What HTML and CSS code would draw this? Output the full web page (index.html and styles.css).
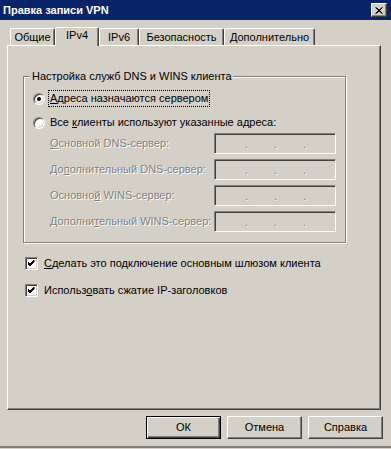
FILE: index.html
```html
<!DOCTYPE html>
<html lang="ru">
<head>
<meta charset="utf-8">
<title>Правка записи VPN</title>
<link rel="stylesheet" href="styles.css">
</head>
<body>
<div class="window">
  <div class="titlebar">
    <span class="title">Правка записи VPN</span>
    <span class="close"><svg width="8" height="7" viewBox="0 0 8 7"><path d="M0.5 0.5 L7 6.5 M1.5 0.5 L7.5 6.5 M7 0.5 L0.5 6.5 M7.5 0.5 L1.5 6.5" stroke="#000" stroke-width="1" fill="none"/></svg></span>
  </div>
  <div class="tabs">
    <div class="tab t1">Общие</div>
    <div class="tab active t2">IPv4</div>
    <div class="tab t3">IPv6</div>
    <div class="tab t4">Безопасность</div>
    <div class="tab t5">Дополнительно</div>
  </div>
  <div class="panel">
    <fieldset class="group">
      <legend>Настройка служб DNS и WINS клиента</legend>
      <div class="radio-row">
        <span class="radio checked"></span>
        <span class="focus"><u>А</u>дреса назначаются сервером</span>
      </div>
      <div class="radio-row second">
        <span class="radio"></span>
        <span>Все <u>к</u>лиенты используют указанные адреса:</span>
      </div>
      <div class="fields">
        <div class="field-row">
          <span class="lbl"><u>О</u>сновной DNS-сервер:</span>
          <span class="ip"><i>.</i><i>.</i><i>.</i></span>
        </div>
        <div class="field-row">
          <span class="lbl">До<u>п</u>олнительный DNS-сервер:</span>
          <span class="ip"><i>.</i><i>.</i><i>.</i></span>
        </div>
        <div class="field-row">
          <span class="lbl">Основно<u>й</u> WINS-сервер:</span>
          <span class="ip"><i>.</i><i>.</i><i>.</i></span>
        </div>
        <div class="field-row">
          <span class="lbl">Дополни<u>т</u>ельный WINS-сервер:</span>
          <span class="ip"><i>.</i><i>.</i><i>.</i></span>
        </div>
      </div>
    </fieldset>
    <div class="check-row first">
      <span class="check"><svg width="7" height="7" viewBox="0 0 7 7"><path d="M0 2 L2 4 L6.5 -0.5 M0 3 L2 5 L6.5 0.5 M0 4 L2 6 L6.5 1.5" stroke="#000" stroke-width="1" fill="none"/></svg></span>
      <span><u>С</u>делать это подключение основным шлюзом клиента</span>
    </div>
    <div class="check-row">
      <span class="check"><svg width="7" height="7" viewBox="0 0 7 7"><path d="M0 2 L2 4 L6.5 -0.5 M0 3 L2 5 L6.5 0.5 M0 4 L2 6 L6.5 1.5" stroke="#000" stroke-width="1" fill="none"/></svg></span>
      <span>Использ<u>о</u>вать сжатие IP-заголовков</span>
    </div>
  </div>
  <div class="buttons">
    <div class="btn default"><span>ОК</span></div>
    <div class="btn"><span>Отмена</span></div>
    <div class="btn"><span>Справка</span></div>
  </div>
</div>
</body>
</html>
```
FILE: styles.css
```css
* { box-sizing: border-box; }
html, body { margin: 0; padding: 0; }
body {
  font-family: "Liberation Sans", Arial, sans-serif;
  font-size: 11px;
  line-height: 13px;
  color: #000;
  background: #d4d0c8;
}
.window {
  width: 391px;
  height: 449px;
  background: #d4d0c8;
  display: flex;
  flex-direction: column;
  border-bottom: 1px solid #d4d0c8;
  box-shadow: inset 0 -2px 0 #808080;
  overflow: hidden;
}
.titlebar {
  height: 20px;
  background: #0a246a;
  display: flex;
  align-items: center;
  justify-content: space-between;
  padding: 0 4px 0 3px;
  flex: none;
}
.title {
  color: #fff;
  font-weight: bold;
  font-size: 11px;
}
.close {
  width: 16px;
  height: 14px;
  background: #d4d0c8;
  border: 1px solid;
  border-color: #fff #404040 #404040 #fff;
  box-shadow: inset -1px -1px 0 #808080;
  display: flex;
  align-items: center;
  justify-content: center;
  padding: 0 1px 0 0;
}
.close svg { display: block; }
.tabs {
  display: flex;
  align-items: flex-end;
  margin-top: 7px;
  padding-left: 10px;
  height: 19px;
  flex: none;
  position: relative;
  z-index: 1;
  margin-bottom: -1px;
}
.tab {
  height: 17px;
  padding-top: 2px;
  text-align: center;
  border: 1px solid;
  border-color: #fff #404040 transparent #fff;
  border-bottom: none;
  border-radius: 2px 2px 0 0;
  box-shadow: inset -1px 0 0 #808080;
  background: #d4d0c8;
  margin-bottom: 1px;
}
.t1 { width: 45px; }
.t2 { width: 44px; }
.t3 { width: 40px; }
.t4 { width: 85px; }
.t5 { width: 91px; }
.tab.active {
  height: 19px;
  padding-top: 1px;
  position: relative;
  z-index: 2;
  margin-bottom: 0;
}
.panel {
  margin-left: 7px;
  width: 374px;
  height: 365px;
  border: 1px solid;
  border-color: #fff #404040 #404040 #fff;
  box-shadow: inset -1px -1px 0 #808080;
  flex: none;
  padding: 0 0 0 15px;
  display: flex;
  flex-direction: column;
}
.group {
  margin: 24px 0 0 0;
  width: 323px;
  height: 173px;
  padding: 8px 0 0 9px;
  border: 1px solid #808080;
  box-shadow: inset 1px 1px 0 #fff, 1px 1px 0 #fff;
  min-width: 0;
}
.group legend {
  padding: 0 1px 0 2px;
  margin-left: -3px;
  background: #d4d0c8;
  line-height: 13px;
}
.radio-row {
  display: flex;
  align-items: center;
  height: 15px;
}
.radio-row.second { margin-top: 9px; }
.radio {
  width: 12px;
  height: 12px;
  border-radius: 50%;
  border: 1px solid;
  border-color: #808080 #fff #fff #808080;
  box-shadow: inset 1px 1px 0 #404040, inset -1px -1px 0 #d4d0c8;
  background: #fff;
  margin-right: 5px;
  display: flex;
  align-items: center;
  justify-content: center;
  flex: none;
}
.radio.checked::after {
  content: "";
  width: 4px;
  height: 4px;
  border-radius: 50%;
  background: #000;
}
.focus {
  outline: 1px dotted #000;
  outline-offset: 0;
  padding: 1px 1px 1px 1px;
  margin-left: -1px;
}
.fields {
  display: flex;
  flex-direction: column;
  gap: 5px;
  margin-top: 3px;
}
.field-row {
  display: flex;
  align-items: center;
  justify-content: space-between;
  height: 21px;
  padding-left: 17px;
  padding-right: 9px;
}
.lbl {
  color: #808080;
  text-shadow: 1px 1px 0 #fff;
}
.ip {
  width: 122px;
  height: 21px;
  border: 1px solid;
  border-color: #808080 #fff #fff #808080;
  box-shadow: inset 1px 1px 0 #404040, inset -1px -1px 0 #d4d0c8;
  background: #d4d0c8;
  display: flex;
  align-items: center;
  padding-left: 30px;
  gap: 26px;
}
.ip i {
  font-style: normal;
  color: #808080;
  text-shadow: 1px 1px 0 #fff;
  width: 3px;
  line-height: 13px;
  padding-top: 2px;
}
.check-row {
  display: flex;
  align-items: center;
  height: 13px;
  margin-left: 2px;
  margin-top: 14px;
}
.check-row.first { margin-top: 14px; }
.check {
  width: 13px;
  height: 13px;
  border: 1px solid;
  border-color: #808080 #fff #fff #808080;
  box-shadow: inset 1px 1px 0 #404040, inset -1px -1px 0 #d4d0c8;
  background: #fff;
  margin-right: 6px;
  display: flex;
  align-items: center;
  justify-content: center;
  flex: none;
}
.check svg { display: block; }
.buttons {
  display: flex;
  justify-content: flex-end;
  gap: 6px;
  padding-right: 8px;
  margin-top: 6px;
  flex: none;
}
.btn {
  width: 75px;
  height: 23px;
  border: 1px solid;
  border-color: #fff #404040 #404040 #fff;
  box-shadow: inset -1px -1px 0 #808080;
  display: flex;
  align-items: center;
  justify-content: center;
  background: #d4d0c8;
}
.btn.default {
  border: 1px solid #000;
  box-shadow: inset 1px 1px 0 #fff, inset -1px -1px 0 #404040, inset -2px -2px 0 #808080;
}
u { text-decoration: underline; text-underline-offset: 1px; }
```
